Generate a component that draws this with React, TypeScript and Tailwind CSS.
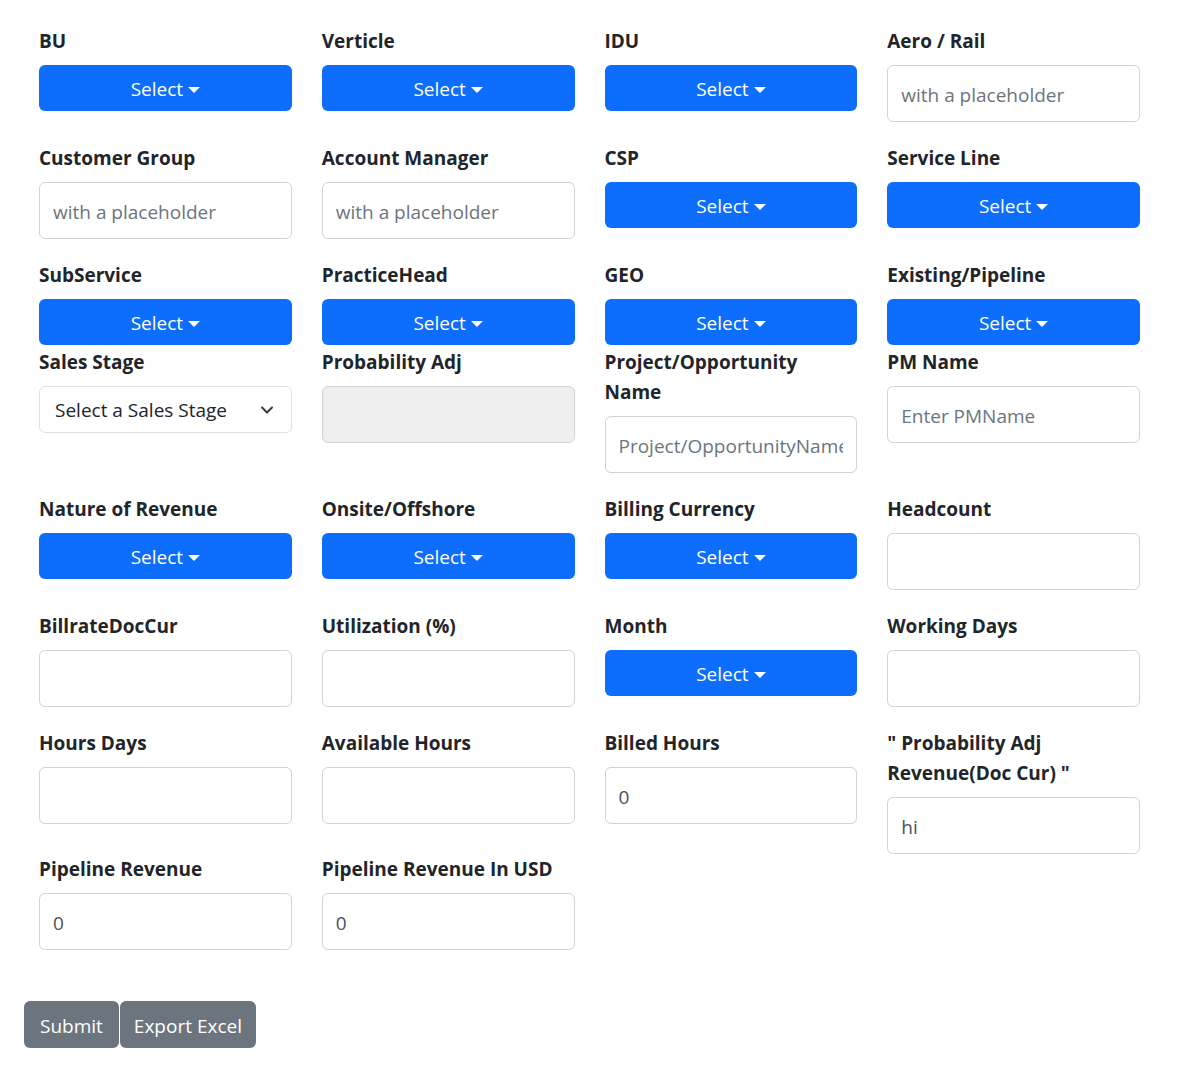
import { ReactNode } from "react";

const font = { fontFamily: '"Open Sans", "Noto Sans", sans-serif' };

function Label({ children }: { children: ReactNode }) {
  return (
    <label className="block text-[19px] leading-[30px] font-bold text-[#212529] mb-[9px]">
      {children}
    </label>
  );
}

function DropButton() {
  return (
    <div className="mb-[2px]">
      <button
        type="button"
        className="w-full h-[46px] pt-[3px] rounded-[6px] bg-[#0d6efd] text-white text-[19px] flex items-center justify-center"
      >
        Select
        <span className="ml-[5px] inline-block w-0 h-0 border-t-[6px] border-t-white border-x-[6px] border-x-transparent" />
      </button>
    </div>
  );
}

function TextInput({
  placeholder,
  value,
  disabled,
  noMargin,
}: {
  placeholder?: string;
  value?: string;
  disabled?: boolean;
  noMargin?: boolean;
}) {
  return (
    <input
      type="text"
      placeholder={placeholder}
      defaultValue={value}
      disabled={disabled}
      className={
        "block w-full h-[57px] px-[13px] pt-[2px] rounded-[6px] border border-[#ced4da] text-[19px] text-[#495057] placeholder-[#6c757d] outline-none " +
        (disabled ? "bg-[#efefef] " : "bg-white ") +
        (noMargin ? "" : "mb-[21px]")
      }
    />
  );
}

function Field({ label, children }: { label: ReactNode; children: ReactNode }) {
  return (
    <div className="px-[15px]">
      <Label>{label}</Label>
      {children}
    </div>
  );
}

function SalesStageSelect() {
  return (
    <div className="relative h-[47px] pt-[2px] rounded-[6px] border border-[#dee2e6] bg-white flex items-center pl-[15px] text-[19px] text-[#212529]">
      Select a Sales Stage
      <svg
        className="absolute right-[16px] top-[17px]"
        width="16"
        height="12"
        viewBox="0 0 16 12"
        fill="none"
        stroke="#343a40"
        strokeWidth="2"
        strokeLinecap="round"
        strokeLinejoin="round"
      >
        <path d="M3 3.5l5 5 5-5" />
      </svg>
    </div>
  );
}

export default function App() {
  return (
    <div className="bg-white min-h-screen pt-[26px] px-6" style={font}>
      <div className="grid grid-cols-4 w-[1131px] items-start">
        <Field label="BU">
          <DropButton />
        </Field>
        <Field label="Verticle">
          <DropButton />
        </Field>
        <Field label="IDU">
          <DropButton />
        </Field>
        <Field label="Aero / Rail">
          <TextInput placeholder="with a placeholder" />
        </Field>

        <Field label="Customer Group">
          <TextInput placeholder="with a placeholder" />
        </Field>
        <Field label="Account Manager">
          <TextInput placeholder="with a placeholder" />
        </Field>
        <Field label="CSP">
          <DropButton />
        </Field>
        <Field label="Service Line">
          <DropButton />
        </Field>

        <Field label="SubService">
          <DropButton />
        </Field>
        <Field label="PracticeHead">
          <DropButton />
        </Field>
        <Field label="GEO">
          <DropButton />
        </Field>
        <Field label="Existing/Pipeline">
          <DropButton />
        </Field>

        <Field label="Sales Stage">
          <SalesStageSelect />
        </Field>
        <Field label="Probability Adj">
          <TextInput disabled />
        </Field>
        <Field
          label={
            <>
              Project/Opportunity
              <br />
              Name
            </>
          }
        >
          <TextInput placeholder="Project/OpportunityName" />
        </Field>
        <Field label="PM Name">
          <TextInput placeholder="Enter PMName" />
        </Field>

        <Field label="Nature of Revenue">
          <DropButton />
        </Field>
        <Field label="Onsite/Offshore">
          <DropButton />
        </Field>
        <Field label="Billing Currency">
          <DropButton />
        </Field>
        <Field label="Headcount">
          <TextInput />
        </Field>

        <Field label="BillrateDocCur">
          <TextInput />
        </Field>
        <Field label="Utilization (%)">
          <TextInput />
        </Field>
        <Field label="Month">
          <DropButton />
        </Field>
        <Field label="Working Days">
          <TextInput />
        </Field>

        <Field label="Hours Days">
          <TextInput />
        </Field>
        <Field label="Available Hours">
          <TextInput />
        </Field>
        <Field label="Billed Hours">
          <TextInput value="0" />
        </Field>
        <Field
          label={
            <>
              " Probability Adj
              <br />
              Revenue(Doc Cur) "
            </>
          }
        >
          <TextInput value="hi" noMargin />
        </Field>

        <Field label="Pipeline Revenue">
          <TextInput value="0" />
        </Field>
        <Field label="Pipeline Revenue In USD">
          <TextInput value="0" />
        </Field>
      </div>

      <div className="flex mt-[30px]">
        <button
          type="button"
          className="h-[47px] px-[16px] pt-[3px] rounded-[6px] bg-[#6c757d] text-white text-[19px]"
        >
          Submit
        </button>
        <button
          type="button"
          className="h-[47px] px-[14px] pt-[3px] ml-px rounded-[6px] bg-[#6c757d] text-white text-[19px]"
        >
          Export Excel
        </button>
      </div>
    </div>
  );
}
